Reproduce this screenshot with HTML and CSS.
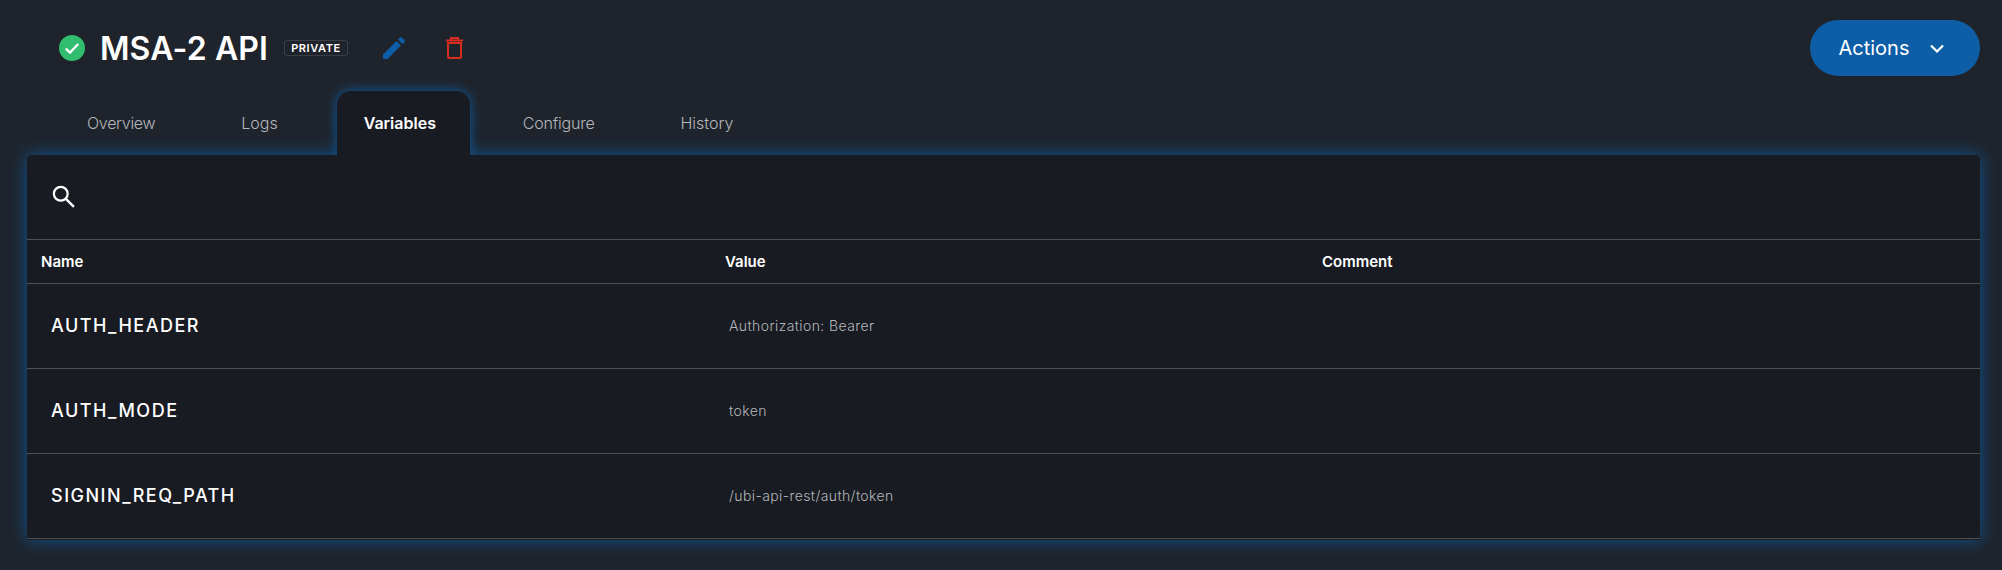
FILE: index.html
```html
<!DOCTYPE html>
<html lang="en">
<head>
    <meta charset="UTF-8">
    <meta name="viewport" content="width=device-width, initial-scale=1.0">
    <title>MSA-2 API</title>
    <link rel="stylesheet" href="styles.css">
</head>
<body>
    <header class="page-head">
        <div class="title-group">
            <svg class="status-icon" viewBox="0 0 26 26">
                <circle cx="13" cy="13" r="13" fill="#32bd70"/>
                <path d="M6.800 13.600l4.200 4 8.200-8.600" fill="none" stroke="#fff" stroke-width="2.200"/>
            </svg>
            <h1 class="title">MSA-2 API</h1>
            <span class="badge">PRIVATE</span>
            <svg class="edit-icon" viewBox="0 0 22 22">
                <path d="M0 22v-4.500L13.500 4l4.500 4.500L4.500 22zM15 2.500L17.300.2a.9.9 0 0 1 1.200 0l3.300 3.300a.9.9 0 0 1 0 1.200L19.500 7z" fill="#0d5ea6"/>
            </svg>
            <svg class="delete-icon" viewBox="0 0 17 22">
                <path d="M2 6h13v14a1 1 0 0 1-1 1H3a1 1 0 0 1-1-1zM0 3.500h17M5 3.500V1h7v2.500" fill="none" stroke="#d92c20" stroke-width="2"/>
            </svg>
        </div>
        <button class="actions-btn">
            Actions
            <svg viewBox="0 0 14 9"><path d="M1 1.500l6 6 6-6" fill="none" stroke="#fff" stroke-width="2.200"/></svg>
        </button>
    </header>

    <nav class="tabs">
        <a class="tab tab-overview">Overview</a>
        <a class="tab tab-logs">Logs</a>
        <a class="tab active">Variables</a>
        <a class="tab tab-configure">Configure</a>
        <a class="tab tab-history">History</a>
    </nav>

    <main class="card">
        <div class="search-row">
            <svg viewBox="0 0 21 21"><circle cx="8" cy="8" r="6.300" fill="none" stroke="#fff" stroke-width="2"/><path d="M12.500 12.500l7.500 7.500" stroke="#fff" stroke-width="2.200"/></svg>
        </div>
        <div class="table-head">
            <span>Name</span>
            <span>Value</span>
            <span>Comment</span>
        </div>
        <div class="table-row">
            <span class="var-name">AUTH_HEADER</span>
            <span class="var-value">Authorization: Bearer</span>
            <span></span>
        </div>
        <div class="table-row">
            <span class="var-name">AUTH_MODE</span>
            <span class="var-value">token</span>
            <span></span>
        </div>
        <div class="table-row">
            <span class="var-name">SIGNIN_REQ_PATH</span>
            <span class="var-value">/ubi-api-rest/auth/token</span>
            <span></span>
        </div>
    </main>
</body>
</html>
```

FILE: styles.css
```css
body {
    margin: 0;
    height: 570px;
    overflow: hidden;
    padding: 0 22px 0 27px;
    box-sizing: border-box;
    background-color: #1f242c;
    font-family: Inter, "Liberation Sans", sans-serif;
    color: #fff;
}
.page-head {
    display: flex;
    justify-content: space-between;
    height: 91px;
    padding: 20px 0 0 32px;
    box-sizing: border-box;
}
.title-group {
    display: flex;
    align-items: center;
    height: 56px;
}
.status-icon {
    width: 26px;
    height: 26px;
    margin-right: 15px;
}
.title {
    margin: 0 16px 0 0;
    font-size: 32px;
    font-weight: 600;
    letter-spacing: 0.1px;
}
.badge {
    width: 64px;
    height: 16px;
    border: 1px solid #393e47;
    border-radius: 3px;
    box-sizing: border-box;
    font-size: 11px;
    font-weight: 600;
    line-height: 14px;
    text-align: center;
    letter-spacing: 0.6px;
}
.edit-icon {
    width: 22px;
    height: 22px;
    margin-left: 35px;
}
.delete-icon {
    width: 17px;
    height: 22px;
    margin-left: 41px;
}
.actions-btn {
    display: flex;
    align-items: center;
    justify-content: center;
    gap: 21px;
    width: 170px;
    height: 56px;
    padding: 0 7px 0 0;
    border: none;
    border-radius: 28px;
    background-color: #0d5ea6;
    color: #fff;
    font-family: inherit;
    font-size: 20px;
    font-weight: 400;
}
.actions-btn svg {
    width: 14px;
    height: 9px;
}
.tabs {
    display: flex;
    height: 64px;
    padding-left: 33px;
}
.tab {
    position: relative;
    z-index: 1;
    padding: 0 27px;
    line-height: 64px;
    font-size: 16px;
    font-weight: 300;
    color: #b4b7bb;
}
.tab-overview {
    letter-spacing: -0.3px;
}
.tab-logs {
    margin-left: 32px;
}
.tab.active {
    margin-left: 32px;
    width: 133px;
    box-sizing: border-box;
    border-radius: 14px 14px 0 0;
    background-color: #181b22;
    color: #fff;
    font-weight: 600;
    box-shadow: 0 0 12px #0d5ea6;
    clip-path: inset(-20px -20px 0 -20px);
}
.tab-configure {
    margin-left: 26px;
    letter-spacing: -0.2px;
}
.tab-history {
    margin-left: 32px;
}
.card {
    height: 385px;
    border-radius: 5px 5px 0 0;
    background-color: #181b22;
    box-shadow: 0 0 18px rgba(13, 94, 166, 0.85);
}
.search-row {
    display: flex;
    align-items: center;
    height: 84px;
    padding: 0 0 2px 25px;
    box-sizing: border-box;
}
.search-row svg {
    width: 23px;
    height: 23px;
}
.table-head,
.table-row {
    display: grid;
    grid-template-columns: 684px 597px 1fr;
    align-items: center;
    border-top: 1px solid #4d4f53;
}
.table-head {
    height: 44px;
    box-sizing: border-box;
    padding: 0 0 1px 14px;
    font-size: 15px;
    font-weight: 600;
}
.table-row {
    height: 85px;
    box-sizing: border-box;
    padding: 0 0 2px 24px;
}
.table-row:last-child {
    height: 86px;
    border-bottom: 1px solid #4d4f53;
}
.var-name {
    font-size: 18px;
    font-weight: 500;
    letter-spacing: 1.5px;
}
.var-value {
    margin-left: -6px;
    font-size: 14px;
    font-weight: 300;
    letter-spacing: 0.4px;
    color: #b4b7bb;
}
```
